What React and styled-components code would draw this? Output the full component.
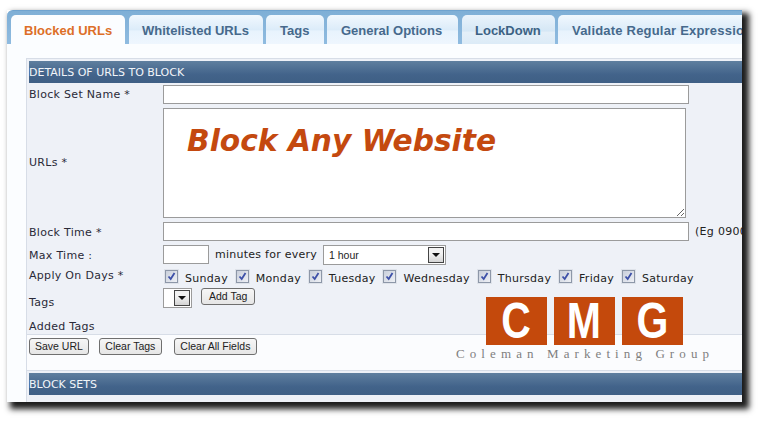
import React from 'react';
import styled, { createGlobalStyle } from 'styled-components';

const GlobalStyle = createGlobalStyle`
  html, body {
    margin: 0;
    padding: 0;
    background: #fff;
    overflow: hidden;
  }
`;

const Page = styled.div`
  width: 765px;
  height: 425px;
  padding: 10px 0 0 7px;
  box-sizing: border-box;
  background: #fff;
`;

const Frame = styled.div`
  position: relative;
  width: 735px;
  height: 392px;
  overflow: hidden;
  background: #fff;
  font-family: "DejaVu Sans", Verdana, sans-serif;
  font-size: 11px;
  color: #222;
`;

const Shadow = styled.div`
  width: 735px;
  height: 392px;
  box-shadow: 5px 5px 6px 2px #1c1c1c;
`;

const TabBar = styled.div`
  display: flex;
  height: 34px;
  padding: 4px 0 0 4px;
  box-sizing: border-box;
  background: linear-gradient(#7fafd6 0, #8fbbe0 100%);
  border-top: 1px solid #6fa3cf;
  border-radius: 6px 0 0 0;
`;

const Tab = styled.div`
  flex: none;
  width: ${p => p.$width}px;
  margin-right: ${p => p.$gap ?? 3}px;
  box-sizing: border-box;
  display: flex;
  align-items: center;
  white-space: nowrap;
  font-family: "Liberation Sans", Arial, sans-serif;
  font-weight: bold;
  font-size: 13px;
  letter-spacing: ${p => p.$track || 0}px;
  padding: 1px 0 0 ${p => p.$pad}px;
  color: ${p => (p.$active ? '#dd6f28' : p.$dim ? '#3c6284' : '#46698c')};
  background: ${p =>
    p.$active
      ? '#fbfdff'
      : p.$dim
      ? 'linear-gradient(#eaf3fb 0, #d5e7f5 55%, #e4eff8 60%, #dcebf7 100%)'
      : 'linear-gradient(#f1f8fe 0, #dcecf9 50%, #e8f3fd 56%, #eef6fe 100%)'};
  border-radius: 5px 5px 0 0;
  height: ${p => (p.$active ? 30 : 29)}px;
`;

const Content = styled.div`
  background: #fbfdff;
  padding: 14px 0 0 19px;
  height: 358px;
  box-sizing: border-box;
`;

const Panel = styled.section`
  width: 730px;
  border-top: 1px solid #d7dde7;
  border-left: 1px solid #d7dde7;
  padding: 2px 0 0 2px;
  background: #eef1f7;
`;

const PanelHeader = styled.div`
  height: 22px;
  line-height: 23px;
  color: #f2f5f9;
  background: linear-gradient(#5f7f9f 0, #42638a 62%, #3f5f85 100%);
`;

const Form = styled.div`
  display: grid;
  grid-template-columns: 134px 1fr;
  grid-template-rows: 25px 114px 23px 23px 20px 29px 18px;
  height: 251px;
`;

const Label = styled.div`
  padding-top: ${p => p.$top || 0}px;
  margin-top: ${p => p.$shift || 0}px;
  align-self: ${p => (p.$center ? 'center' : 'start')};
  white-space: nowrap;
  letter-spacing: 0.3px;
  color: #2a2a38;
`;

const Cell = styled.div`
  display: flex;
  align-items: flex-start;
  padding-top: ${p => p.$top ?? 2}px;
  white-space: nowrap;
  position: relative;
`;

const TextBox = styled.input`
  box-sizing: border-box;
  width: ${p => p.$width}px;
  height: 19px;
  padding: 0;
  margin: 0;
  border: 1px solid #9b9b9b;
  border-radius: 0;
  background: #fff;
  outline: none;
`;

const Area = styled.textarea`
  box-sizing: border-box;
  display: block;
  width: 523px;
  height: 110px;
  padding: 0;
  margin: 0;
  border: 1px solid #9b9b9b;
  border-radius: 0;
  background: #fff;
  outline: none;
  resize: both;
`;

const Overlay = styled.div`
  position: absolute;
  left: 24px;
  top: 15px;
  font-family: "DejaVu Sans", Verdana, sans-serif;
  font-weight: bold;
  font-style: italic;
  font-size: 29.7px;
  line-height: 36px;
  color: #c4490f;
  white-space: nowrap;
`;

const Hint = styled.span`
  margin-left: 6px;
  line-height: 19px;
  letter-spacing: 0.3px;
`;

const InlineText = styled.span`
  margin: 0 6px;
  line-height: 19px;
  letter-spacing: 0.25px;
`;

const Select = styled.div`
  box-sizing: border-box;
  display: flex;
  align-items: center;
  justify-content: space-between;
  flex: none;
  width: ${p => p.$width}px;
  height: 20px;
  padding: 0 1px 0 ${p => p.$pad || 0}px;
  border: 1px solid #9b9b9b;
  background: #fff;
  font-family: "Liberation Sans", Arial, sans-serif;
  font-size: 10.5px;
  color: #222;
`;

const SelectArrow = styled.div`
  box-sizing: border-box;
  width: 16px;
  height: 16px;
  display: flex;
  align-items: center;
  justify-content: center;
  border: 1px solid #444;
  background: linear-gradient(#f2f2f2 40%, #d4d4d4);
  margin-left: auto;

  &::after {
    content: '';
    border-left: 4px solid transparent;
    border-right: 4px solid transparent;
    border-top: 4px solid #111;
  }
`;

const Days = styled.div`
  display: flex;
  align-items: center;
  gap: 7.8px;
  padding-left: 2px;
  height: 17px;
`;

const Day = styled.label`
  display: flex;
  align-items: center;
  gap: 7px;
  letter-spacing: 0.3px;
  line-height: 17px;

  span {
    position: relative;
    top: 2px;
  }
`;

const Check = styled.div`
  box-sizing: border-box;
  width: 13px;
  height: 13px;
  border: 1px solid #8d97a8;
  background: linear-gradient(135deg, #c9cfdb, #eef0f5);
  display: flex;
  align-items: center;
  justify-content: center;
  box-shadow: 0 0 0 1px #dfe3ea;
`;

const Button = styled.button`
  box-sizing: border-box;
  height: 17px;
  padding: 0 ${p => p.$pad || 5}px;
  margin: 0 ${p => p.$gap || 0}px 0 ${p => p.$left || 0}px;
  border: 1px solid #6f6f6f;
  border-radius: 3px;
  background: linear-gradient(#f6f6f6 0, #e6e6e6 100%);
  font-family: "Liberation Sans", Arial, sans-serif;
  font-size: 10.5px;
  line-height: 13px;
  color: #222;
  white-space: nowrap;
`;

const Footer = styled.div`
  display: flex;
  align-items: flex-start;
  height: 36px;
  box-sizing: border-box;
  padding: 3px 0 0 2px;
  margin-left: -2px;
  border-top: 1px solid #d7dde7;
  background: #fbfcfe;
`;

const BlockSets = styled(Panel)`
  height: 40px;
`;

const Logo = styled.div`
  position: absolute;
  left: 449px;
  top: 287px;
  width: 270px;
`;

const LogoSquares = styled.div`
  display: flex;
  gap: 7.5px;
  margin-left: 30px;
`;

const Square = styled.div`
  width: 60.5px;
  height: 48px;
  background: #c4490c;
  color: #fff;
  font-family: "Liberation Sans", Arial, sans-serif;
  font-weight: bold;
  font-size: 50px;
  line-height: 48px;
  text-align: center;
`;

const Letter = styled.span`
  display: inline-block;
  transform: scaleX(0.82);
`;

const LogoText = styled.div`
  font-family: "Liberation Serif", "Times New Roman", serif;
  font-size: 13px;
  line-height: 15px;
  margin-top: 1px;
  letter-spacing: 5.1px;
  color: #7f7f7f;
  white-space: nowrap;
`;

const CheckMark = () => (
  <svg width="9" height="9" viewBox="0 0 9 9">
    <path d="M1.5 4.5 L3.7 7 L7.5 1" fill="none" stroke="#3d50a8" strokeWidth="1.8" />
  </svg>
);

const days = ['Sunday', 'Monday', 'Tuesday', 'Wednesday', 'Thursday', 'Friday', 'Saturday'];

const App = () => {
  return (
    <Page>
      <GlobalStyle />
      <Shadow>
        <Frame>
          <TabBar>
            <Tab $active $width={114} $pad={13} $gap={4}>Blocked URLs</Tab>
            <Tab $width={134} $pad={13}>Whitelisted URLs</Tab>
            <Tab $width={58} $pad={14}>Tags</Tab>
            <Tab $width={131} $pad={14} $gap={4}>General Options</Tab>
            <Tab $dim $width={93} $pad={13}>LockDown</Tab>
            <Tab $width={240} $pad={14} $track={0.2}>Validate Regular Expressions</Tab>
          </TabBar>
          <Content>
            <Panel>
              <PanelHeader>DETAILS OF URLS TO BLOCK</PanelHeader>
              <Form>
                <Label $top={5}>Block Set Name *</Label>
                <Cell><TextBox $width={526} /></Cell>
                <Label $center $shift={-6}>URLs *</Label>
                <Cell $top={0}>
                  <Area />
                  <Overlay>Block Any Website</Overlay>
                </Cell>
                <Label $top={4}>Block Time *</Label>
                <Cell $top={0}>
                  <TextBox $width={526} />
                  <Hint>(Eg 0900-1700)</Hint>
                </Cell>
                <Label $top={4}>Max Time :</Label>
                <Cell $top={0}>
                  <TextBox $width={46} />
                  <InlineText>minutes for every</InlineText>
                  <Select $width={123} $pad={5}>
                    1 hour
                    <SelectArrow />
                  </Select>
                </Cell>
                <Label $top={1}>Apply On Days *</Label>
                <Cell $top={0}>
                  <Days>
                    {days.map(day => (
                      <Day key={day}>
                        <Check><CheckMark /></Check>
                        <span>{day}</span>
                      </Day>
                    ))}
                  </Days>
                </Cell>
                <Label $top={8}>Tags</Label>
                <Cell $top={0}>
                  <Select $width={29}><SelectArrow /></Select>
                  <Button $left={9} $pad={7}>Add Tag</Button>
                </Cell>
                <Label $top={3}>Added Tags</Label>
                <Cell />
              </Form>
              <Footer>
                <Button $gap={10}>Save URL</Button>
                <Button $gap={12} $pad={5.5}>Clear Tags</Button>
                <Button $pad={5.5}>Clear All Fields</Button>
              </Footer>
            </Panel>
            <BlockSets>
              <PanelHeader>BLOCK SETS</PanelHeader>
            </BlockSets>
          </Content>
          <Logo>
            <LogoSquares>
              <Square><Letter>C</Letter></Square>
              <Square><Letter>M</Letter></Square>
              <Square><Letter>G</Letter></Square>
            </LogoSquares>
            <LogoText>Coleman Marketing Group</LogoText>
          </Logo>
        </Frame>
      </Shadow>
    </Page>
  );
};

export default App;
